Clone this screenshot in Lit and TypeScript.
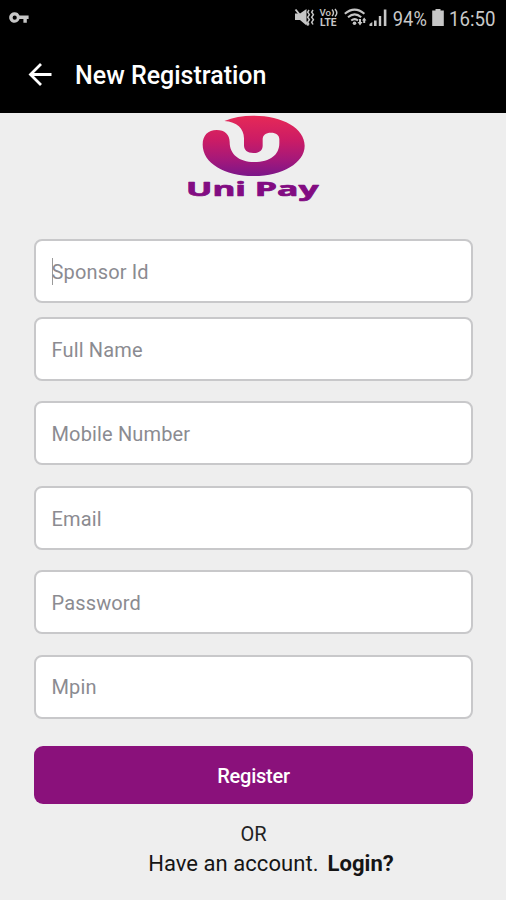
import { LitElement, html, css } from "lit";
import { customElement } from "lit/decorators.js";

const fields = [
  { label: "Sponsor Id", cls: "f0" },
  { label: "Full Name", cls: "f1" },
  { label: "Mobile Number", cls: "f2" },
  { label: "Email", cls: "f3" },
  { label: "Password", cls: "f4" },
  { label: "Mpin", cls: "f5" },
];

@customElement("status-bar")
class StatusBar extends LitElement {
  static styles = css`
    :host { display: flex; justify-content: space-between; height: 36px; background: #000; }
    svg { display: block; }
    text { font-family: Roboto, sans-serif; fill: #c9c9c9; }
    .time { font-size: 21px; }
    .vo { font-size: 9px; font-weight: 500; }
    .lte { font-size: 10.5px; font-weight: 700; }
    .shape { fill: #c6c6c6; }
    .line { fill: none; stroke: #c6c6c6; }
  `;
  render() {
    return html`
      <svg width="36" height="36" viewBox="0 0 36 36">
        <path class="shape" fill-rule="evenodd" d="M14.700 12.200a5.300 5.300 0 0 1 4.800 3.300h9.100v3.500h-1.800v3.700h-3.400v-3.700h-3.900a5.300 5.300 0 1 1-4.800-6.800zm0 3.400a2.100 2.100 0 1 0 0 4.200 2.100 2.100 0 0 0 0-4.200z"/>
      </svg>
      <svg width="220" height="36" viewBox="286 0 220 36">
        <path class="shape" d="M295 13.500h5l6.500-4.500v16.500l-6.500-5.500h-5z"/>
        <path class="line" stroke-width="1.900" d="M295.500 9.500l13 16"/>
        <path class="line" stroke-width="1.500" d="M309 10l-1.300 2.200 1.700 2.500-1.700 2.500 1.700 2.500-1.700 2.500 1.300 2.300M313 10l-1.300 2.200 1.700 2.500-1.700 2.500 1.700 2.500-1.700 2.500 1.300 2.300"/>
        <text><tspan class="vo" x="319.500" y="15.800" textLength="11.500" lengthAdjust="spacingAndGlyphs">Vo</tspan><tspan class="lte" x="320" y="26" textLength="16.500" lengthAdjust="spacingAndGlyphs">LTE</tspan></text>
        <path class="line" stroke-width="1.400" d="M332 9.500q3 3.500 0 6.500M335 9q3.600 4 0 7.500"/>
        <path class="line" stroke-width="2" d="M344.800 13.700q9.800-8.200 19.600 0M348 17.200q6.700-5.600 13.200 0M351.200 20.600q3.600-3 6.800 0"/>
        <circle class="shape" cx="354.500" cy="23.300" r="1.800"/>
        <path class="shape" d="M357.500 22h1.500v-3h2v3h1.500l-2.500 3.500zM362 20.500l2.200-3 2.200 3h-1.200v2.500h-2v-2.500z"/>
        <path class="shape" d="M369.500 24l2.800-2v4h-2.800zM374 20.500h2.600V26H374zM378.800 16h2.400v10h-2.400zM383.800 9.500h2.600V26h-2.600z"/>
        <text class="time" x="392.800" y="25.700" textLength="34" lengthAdjust="spacingAndGlyphs">94%</text>
        <path class="shape" d="M435.500 9h5v1.600h3.300V26h-11.600V10.600h3.300z"/>
        <text class="time" x="449" y="25.700" textLength="46.500" lengthAdjust="spacingAndGlyphs">16:50</text>
      </svg>`;
  }
}

@customElement("uni-logo")
class UniLogo extends LitElement {
  static styles = css`
    :host { display: block; }
    svg { display: block; }
    text { font-family: "Open Sans", sans-serif; font-weight: 700; font-size: 56px; fill: #820c82; stroke: #820c82; stroke-width: 2; stroke-linejoin: round; }
  `;
  render() {
    return html`
      <svg width="170" height="90" viewBox="0 24 510 270">
        <defs>
          <linearGradient id="g" x1="0" y1="0" x2="0" y2="1">
            <stop offset="0" stop-color="#e62957"/>
            <stop offset=".4" stop-color="#cc1c65"/>
            <stop offset=".75" stop-color="#a2187b"/>
            <stop offset="1" stop-color="#7b1689"/>
          </linearGradient>
        </defs>
        <path fill="url(#g)" d="M163 48C188 37 218 32 250 32C336 32 404 69 404 122C404 174 336 213 250 213C164 213 98 174 98 119C98 91 114 75 140 75C164 75 179 89 179 111C179 148 207 171 252 171C302 171 328 149 328 114V103C328 90 318 83 303 83C287 83 278 90 278 103V122C278 136 268 144 250 144C232 144 222 136 222 121V100C222 71 201 50 163 48Z"/>
        <text x="48" y="272" textLength="180" lengthAdjust="spacingAndGlyphs">Uni</text>
        <text x="254" y="272" textLength="192" lengthAdjust="spacingAndGlyphs">Pay</text>
      </svg>`;
  }
}

@customElement("app-root")
class AppRoot extends LitElement {
  static styles = css`
    :host { display: flex; flex-direction: column; height: 900px; background: #eee; font-family: Roboto, sans-serif; overflow: hidden; }
    header { display: flex; align-items: center; height: 77px; background: #000; color: #fff; padding-left: 28px; box-sizing: border-box; }
    header svg { display: block; }
    h1 { margin: 0 0 0 23px; padding-top: 2px; font-size: 25px; line-height: 30px; font-weight: 500; white-space: nowrap; }
    uni-logo { align-self: center; margin-left: 4px; }
    form { display: flex; flex-direction: column; padding: 36px 33px 0 34px; }
    .field { display: flex; align-items: center; height: 64px; box-sizing: border-box; margin-bottom: 20.400px; padding: 1.500px 0 0 15.500px; border: 2px solid #c8c8ca; border-radius: 8px; background: #fff; color: #8b8b91; font-size: 20px; letter-spacing: .15px; }
    .f0 { margin-bottom: 14px; }
    .f5 { margin-bottom: 27.400px; }
    .caret { width: 1px; height: 27px; background: #9a9a9a; margin-right: -1px; }
    button { height: 58px; border: 0; border-radius: 9px; background: #8a117b; color: #fff; font: 500 20px Roboto, sans-serif; letter-spacing: -.25px; padding: 3px 0 0; }
    .or { margin-top: 18px; padding-left: 1px; text-align: center; font-size: 20px; line-height: 24px; color: #222; }
    .login { display: flex; justify-content: center; gap: 9px; margin-left: 36px; margin-top: 4px; font-size: 22px; line-height: 28px; letter-spacing: .05px; color: #151515; white-space: nowrap; }
    .login b { font-weight: 700; }
  `;
  render() {
    return html`
      <status-bar></status-bar>
      <header>
        <svg width="24" height="26" viewBox="0 0 24 26"><path d="M23.500 12.500H2.500M13 2L2.500 12.500L13 23" fill="none" stroke="#fff" stroke-width="2.800"/></svg>
        <h1>New Registration</h1>
      </header>
      <uni-logo></uni-logo>
      <form>
        ${fields.map((f, i) => html`<div class="field ${f.cls}">${i === 0 ? html`<span class="caret"></span>` : ""}<span>${f.label}</span></div>`)}
        <button type="button">Register</button>
      </form>
      <div class="or">OR</div>
      <div class="login"><span>Have an account.</span><b>Login?</b></div>`;
  }
}
